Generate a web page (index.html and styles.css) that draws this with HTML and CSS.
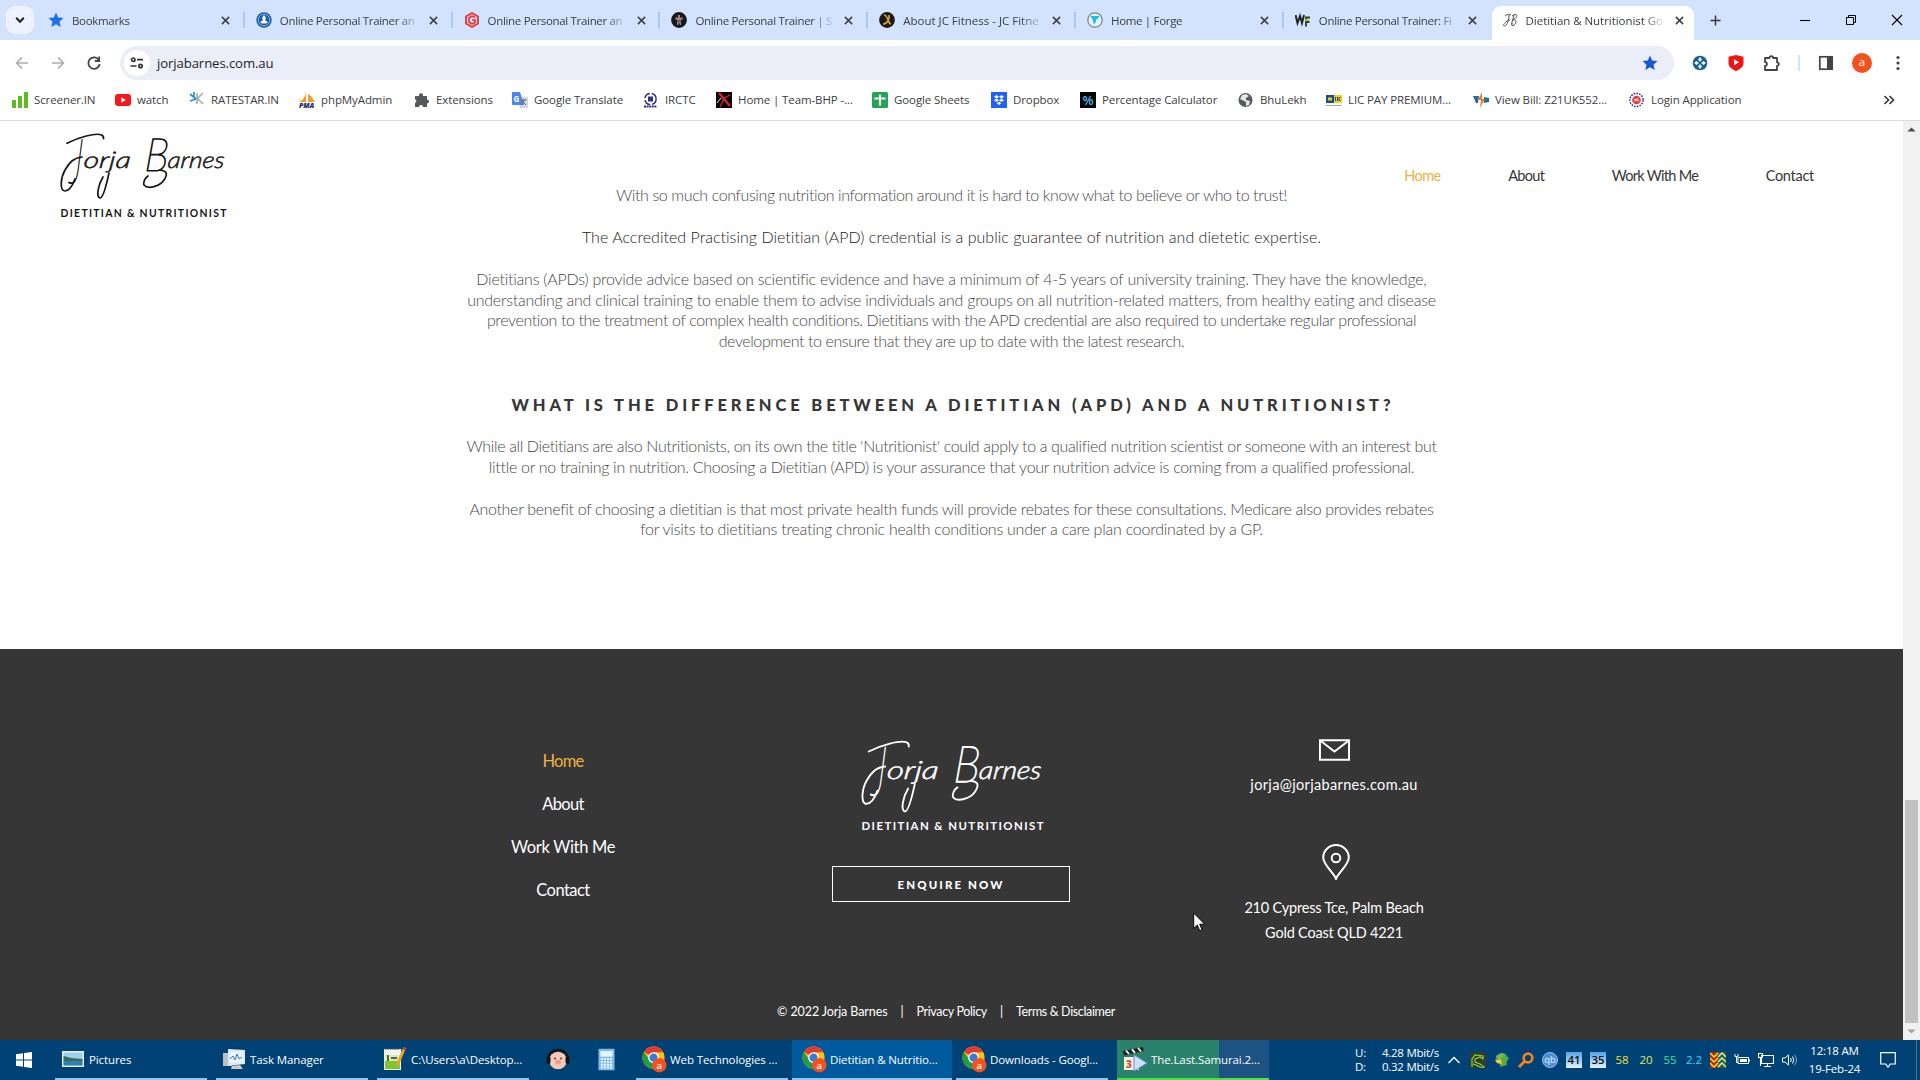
FILE: index.html
```html
<!DOCTYPE html>
<html lang="en">
<head>
<meta charset="utf-8">
<title>Dietitian &amp; Nutritionist Gold Coast</title>
<link rel="stylesheet" href="styles.css">
</head>
<body>
<svg class="defs" aria-hidden="true">
  <symbol id="close" viewBox="0 0 10 10"><path d="M1 1l8 8M9 1l-8 8" stroke="currentColor" stroke-width="1.7" fill="none"/></symbol>
  <symbol id="star" viewBox="0 0 16 16"><path d="M8 .6l2.200 5 5.300.5-4 3.600 1.200 5.400L8 12.300l-4.700 2.800 1.200-5.400-4-3.600 5.300-.5z" fill="currentColor"/></symbol>
  <symbol id="chrome" viewBox="0 0 26 28">
    <circle cx="12" cy="12" r="11.500" fill="#fbc116"/>
    <path d="M12 12L2 6.200A11.500 11.500 0 0 1 22 6.200V6.500H12z" fill="#e33b2e"/>
    <path d="M2 6.200A11.500 11.500 0 0 0 11.500 23.500L16 15 7.500 14z" fill="#229a49"/>
    <circle cx="12" cy="12" r="5.600" fill="#fff"/><circle cx="12" cy="12" r="4.300" fill="#2f7de1"/>
    <circle cx="18" cy="20" r="7.500" fill="#f4511e"/>
    <text x="18" y="23.500" font-family="Open Sans, sans-serif" font-size="10" font-weight="600" text-anchor="middle" fill="#fff">a</text>
  </symbol>
  <symbol id="signature" viewBox="0 0 168 72">
    <g fill="currentColor" font-family="Lato, sans-serif" font-style="italic" stroke="currentColor">
      <text font-weight="100" font-size="62" transform="translate(10 52) skewX(-4) scale(.5 1)" stroke-width="1.2">J</text>
      <text font-weight="300" font-size="23" transform="translate(24 37) skewX(-6)" textLength="47" lengthAdjust="spacingAndGlyphs" stroke-width=".5">orja</text>
      <text font-weight="100" font-size="46" transform="translate(85 40) skewX(-4) scale(.9 1)" stroke-width="1.2">B</text>
      <text font-weight="300" font-size="23" transform="translate(108 37) skewX(-6)" textLength="57" lengthAdjust="spacingAndGlyphs" stroke-width=".5">arnes</text>
    </g>
    <g fill="none" stroke="currentColor" stroke-width="1.700" stroke-linecap="round">
      <path d="M8 12.300C20 6 36 2 42 3.700q3 1 2.500 4"/>
      <path d="M16 48C13 56 10 60 6 60 0 60 2 46 6 39S14 27 23 26"/>
      <path d="M50 42C47 56 44 67 41 67c-4-1-2-13 3-21"/>
      <path d="M101 39c7 1 8 4 4 10S89 59 85 54c-1-3 1-7 4-9"/>
    </g>
  </symbol>
</svg>

<div class="tabstrip">
  <div class="tab-search"><svg width="10" height="8" viewBox="0 0 10 8"><path d="M1.200 1.800L5 5.800l3.800-4" fill="none" stroke="#222" stroke-width="2"/></svg></div>
  <div class="tab"><svg class="fav blue" viewBox="0 0 16 16"><use href="#star"/></svg><span class="title"><b>Bookmarks</b></span><svg class="x"><use href="#close"/></svg></div>
  <div class="tab"><svg class="fav" viewBox="0 0 16 16"><circle cx="8" cy="8" r="7.700" fill="#1d5fa8"/><circle cx="8" cy="8" r="5.800" fill="none" stroke="#9cc3ea" stroke-width=".8"/><path d="M8 3l2 3-1 2 3 2.500-2 1H6l-2-1L7 8 6 6z" fill="#fff"/></svg><span class="title"><b>Online Personal Trainer an</b></span><svg class="x"><use href="#close"/></svg></div>
  <div class="tab"><svg class="fav" viewBox="0 0 16 16"><path d="M8 1l6 3.500v7L8 15l-6-3.500v-7z" fill="none" stroke="#ee2f2f" stroke-width="1.800"/><path d="M11 5.500L8 4 5 6v4l3 2 3-1.500V8H8" fill="none" stroke="#ee2f2f" stroke-width="1.600"/></svg><span class="title"><b>Online Personal Trainer an</b></span><svg class="x"><use href="#close"/></svg></div>
  <div class="tab"><svg class="fav" viewBox="0 0 16 16"><circle cx="8" cy="8" r="7.900" fill="#17181c"/><path d="M7 3h2v3l2-1 1 2-2 1v5H9l-1-3-1 3H6V8L4 7l1-2 2 1z" fill="#b77f79"/><path d="M6 8h4v2H6z" fill="#3a6f9c"/></svg><span class="title"><b>Online Personal Trainer | S</b></span><svg class="x"><use href="#close"/></svg></div>
  <div class="tab"><svg class="fav" viewBox="0 0 16 16"><circle cx="8" cy="8" r="7.900" fill="#1b1a17"/><path d="M5 3c2 0 3 2 4 5s2 4 3 4M10 3c1 4-2 9-6 9" fill="none" stroke="#d3a22f" stroke-width="1.700"/></svg><span class="title wide"><b>About JC Fitness - JC Fitne</b></span><svg class="x"><use href="#close"/></svg></div>
  <div class="tab"><svg class="fav" viewBox="0 0 16 16"><circle cx="8" cy="8" r="7.200" fill="#e9f3fb" stroke="#74818c" stroke-width="1.200"/><path d="M3.500 4h9l-2 3H8.500l1 1.500L7 13 6 8.500z" fill="#12c3de"/></svg><span class="title"><b>Home | Forge</b></span><svg class="x"><use href="#close"/></svg></div>
  <div class="tab last"><svg class="fav" viewBox="0 0 16 16"><path d="M.5 3l2 8L5 4l2 7 2-8" fill="none" stroke="#222" stroke-width="2"/><path d="M15 5.500h-4v9M11 10h3.500" fill="none" stroke="#333" stroke-width="1.800"/><path d="M10 8.500l4-1.500" stroke="#8fd329" stroke-width="2"/></svg><span class="title"><b>Online Personal Trainer: Fi</b></span><svg class="x"><use href="#close"/></svg></div>
  <div class="tab active"><svg class="fav" viewBox="0 0 16 16"><path d="M2 4c2-2 5-2 6-1M6 3C6 8 4 14 1.500 14S2 9 7 8M9 4c4-3 6-1 4 1.500L10 8c4-1 4 4 0 5.500-2 .5-2-1 0-2M11 3L8.500 12" fill="none" stroke="#555" stroke-width="1"/></svg><span class="title"><b>Dietitian &amp; Nutritionist Go</b></span><svg class="x"><use href="#close"/></svg></div>
  <svg class="newtab" viewBox="0 0 12 12"><path d="M6 .5v11M.5 6h11" stroke="#333" stroke-width="1.600"/></svg>
  <div class="winbtns">
    <svg viewBox="0 0 12 12"><path d="M1 6.500h10" stroke="#000" stroke-width="1.100"/></svg>
    <svg viewBox="0 0 12 12"><path d="M1.500 3.500h7v7h-7zM3.500 3.500v-2h7v7h-2" fill="none" stroke="#000"/></svg>
    <svg viewBox="0 0 12 12"><path d="M1 1l10 10M11 1L1 11" stroke="#000" stroke-width="1.100"/></svg>
  </div>
</div>

<div class="toolbar">
  <svg class="nav dim" viewBox="0 0 16 16"><path d="M14 8H2.500M8 2.500L2.500 8 8 13.500" fill="none" stroke="currentColor" stroke-width="1.600"/></svg>
  <svg class="nav dim" viewBox="0 0 16 16"><path d="M2 8h11.500M8 2.500L13.500 8 8 13.500" fill="none" stroke="currentColor" stroke-width="1.600"/></svg>
  <svg class="nav" viewBox="0 0 16 16"><path d="M13 5.200A5.700 5.700 0 1 0 13.700 9" fill="none" stroke="currentColor" stroke-width="1.800"/><path d="M13.200 1.500V6H8.800" fill="none" stroke="currentColor" stroke-width="1.800"/></svg>
  <div class="omnibox">
    <div class="siteinfo"><svg width="14" height="12" viewBox="0 0 14 12"><g fill="none" stroke="#333" stroke-width="1.700"><circle cx="3.300" cy="2.700" r="1.700"/><path d="M7 2.700h6M.5 9h6"/><circle cx="10.500" cy="9" r="1.700"/></g></svg></div>
    <span class="url">jorjabarnes.com.au</span>
    <svg class="bookmarked" viewBox="0 0 16 16"><use href="#star"/></svg>
  </div>
  <div class="exts">
    <svg viewBox="0 0 16 16"><circle cx="8" cy="8" r="7.300" fill="#1f5f8c"/><path d="M8 2l2 2.500L8 7 6 4.500zM8 9l2 2.500L8 14l-2-2.500zM2 8l2.500-2L7 8l-2.500 2zM9 8l2.500-2L14 8l-2.500 2z" fill="#e5f3fb"/></svg>
    <svg viewBox="0 0 16 16"><path d="M8 0l7.500 1.800V8c0 4-4 6.500-7.500 8C4.500 14.500.5 12 .5 8V1.800z" fill="#f01414"/><path d="M6 4.300l5 3-5 3z" fill="#fff"/></svg>
    <svg viewBox="0 0 16 16"><path d="M1 3h4.500a1.800 1.800 0 0 1 3.600 0H13v4.300a1.800 1.800 0 0 1 0 3.600V15H1v-4a2 2 0 0 0 0-4z" fill="none" stroke="#444" stroke-width="1.800" stroke-linejoin="round"/></svg>
    <i></i>
    <svg viewBox="0 0 16 16"><rect x="1.800" y="1.800" width="12.400" height="12.400" fill="none" stroke="#444" stroke-width="1.700"/><path d="M9 2h5v12H9z" fill="#444"/></svg>
    <span class="avatar">a</span>
    <svg viewBox="0 0 16 16"><g fill="#444"><circle cx="8" cy="2.500" r="1.600"/><circle cx="8" cy="8" r="1.600"/><circle cx="8" cy="13.500" r="1.600"/></g></svg>
  </div>
</div>

<div class="bookmarks">
  <div class="bm"><svg viewBox="0 0 16 16"><path d="M0 8h4v8H0zM6 4h4v12H6zM12 0h4v16h-4z" fill="#5ebd22"/></svg><span>Screener.IN</span></div>
  <div class="bm"><svg viewBox="0 0 16 16"><rect y="2" width="16" height="12" rx="3" fill="#f8181b"/><path d="M6.300 5.200l4.500 2.800-4.500 2.800z" fill="#fff"/></svg><span>watch</span></div>
  <div class="bm"><svg viewBox="0 0 16 16"><path d="M1 2l6 5-6 2M5 0v6" fill="none" stroke="#2a8fcc" stroke-width="1.700"/><path d="M8 1v11M14 1L8.500 6.500 14 12" fill="none" stroke="#a8adb2" stroke-width="1.600"/></svg><span>RATESTAR.IN</span></div>
  <div class="bm"><svg viewBox="0 0 16 16"><path d="M7 0v10H0c4-2 6-5 7-10zM9 2c4 2 5 5 7 8H9z" fill="#f79a2b"/><text x="0" y="15.500" font-family="Open Sans, sans-serif" font-size="6" font-weight="800" font-style="italic" fill="#23285e" textLength="15" lengthAdjust="spacingAndGlyphs">PMA</text></svg><span>phpMyAdmin</span></div>
  <div class="bm"><svg viewBox="0 0 16 16"><path d="M1 4h4.200a2 2 0 1 1 3.600 0H13v3.500a2 2 0 1 1 0 4V15H9a2 2 0 0 0-4 0H1v-4a2 2 0 0 0 0-3.800z" fill="#55585c"/></svg><span>Extensions</span></div>
  <div class="bm"><svg viewBox="0 0 16 16"><path d="M6 5h10v11H8z" fill="#d5d8dc"/><path d="M0 1q0-1 1-1h7l4 13H1q-1 0-1-1z" fill="#4a86ef"/><text x="1.500" y="9.500" font-family="Open Sans, sans-serif" font-size="8" font-weight="700" fill="#fff">G</text><path d="M9.500 8h5M12 7v1c0 3-2 4-3 5M10 9l4 4" stroke="#667" fill="none"/></svg><span>Google Translate</span></div>
  <div class="bm"><svg viewBox="0 0 16 16"><circle cx="7.500" cy="7" r="5.600" fill="none" stroke="#2b2f87" stroke-width="1.500" stroke-dasharray="7 2"/><rect x="5" y="4.500" width="5" height="5" fill="#2b2f87"/><path d="M1 14.500h13" stroke="#2b2f87" stroke-width="2" stroke-dasharray="2 .6"/></svg><span>IRCTC</span></div>
  <div class="bm"><svg viewBox="0 0 16 16"><path d="M0 0h16v16H0z" fill="#050505"/><path d="M3 1l11 13" stroke="#e3222a" stroke-width="2.200"/><path d="M8 6l6-3M4 15l4-8" stroke="#e3222a" stroke-width="1.300"/><path d="M1 11l4-5" stroke="#ddd"/></svg><span>Home | Team-BHP -...</span></div>
  <div class="bm"><svg viewBox="0 0 16 16"><rect width="16" height="16" rx="1.500" fill="#23a455"/><path d="M8 2.500v11M2.500 6.500h11" stroke="#fff" stroke-width="2"/></svg><span>Google Sheets</span></div>
  <div class="bm"><svg viewBox="0 0 16 16"><path d="M0 0h16v16H0z" fill="#1f62fb"/><path d="M5.500 3L8 4.700 5.500 6.400 3 4.700zM10.500 3L13 4.700l-2.500 1.700L8 4.700zM5.500 6.600L8 8.300 5.500 10 3 8.300zM10.500 6.600L13 8.300 10.500 10 8 8.300zM8 9.700l2.300 1.600L8 13l-2.300-1.700z" fill="#fff"/></svg><span>Dropbox</span></div>
  <div class="bm"><svg viewBox="0 0 16 16"><path d="M0 0h16v16H0z" fill="#050505"/><text x="2.500" y="13" font-family="Open Sans, sans-serif" font-size="13" font-weight="600" fill="#4cb8ee" textLength="11" lengthAdjust="spacingAndGlyphs">%</text></svg><span>Percentage Calculator</span></div>
  <div class="bm"><svg viewBox="0 0 16 16"><circle cx="7.500" cy="8" r="7" fill="#55585c"/><path d="M4 3l4-1 3 2-3 2v2l4 1-1 4-3 1v-4L4 8 2 7z" fill="#fff" opacity=".85"/></svg><span>BhuLekh</span></div>
  <div class="bm"><svg viewBox="0 0 16 16"><path d="M0 3h8v8H0z" fill="#1b4b92"/><path d="M8 3h8v8H8z" fill="#f3cf1d"/><path d="M2 5.500h4v3H2z" fill="#f3cf1d"/><path d="M9.500 5v4M11.500 5v4M14.500 5.500h-1.500v3h1.500" stroke="#1b4b92" fill="none"/><path d="M0 13.500h16" stroke="#9aa9bf"/></svg><span>LIC PAY PREMIUM...</span></div>
  <div class="bm"><svg viewBox="0 0 16 16"><path d="M0 4h6l-1 7H3zM11 5l5 1v4l-5 1z" fill="#1f6f93"/><path d="M9 0L5 8h3l-1 8 5-9H9z" fill="#f07a2c"/></svg><span>View Bill: Z21UK552...</span></div>
  <div class="bm"><svg viewBox="0 0 16 16"><circle cx="7.500" cy="8" r="6.600" fill="none" stroke="#2b2f77" stroke-width="1.500" stroke-dasharray="1.600 1.200"/><circle cx="7.500" cy="8" r="4.300" fill="#e63a44"/><path d="M5 7l5 2M5.500 9.500L9.500 6" stroke="#fff"/></svg><span>Login Application</span></div>
  <svg class="more" viewBox="0 0 12 10"><path d="M1.500 1l4 4-4 4M6.500 1l4 4-4 4" fill="none" stroke="#333" stroke-width="1.600"/></svg>
</div>

<div class="viewport">
  <div class="page">
    <header class="site-header">
      <div class="logo"><svg class="sig" aria-label="Jorja Barnes"><use href="#signature"/></svg><span class="tag">DIETITIAN &amp; NUTRITIONIST</span></div>
      <nav class="site-nav"><a class="on">Home</a><a class="about">About</a><a class="work">Work With Me</a><a class="reach">Contact</a></nav>
    </header>
    <main class="copy">
      <p><span class="l1">With so much confusing nutrition information around it is hard to know what to believe or who to trust!</span></p>
      <p class="lead"><span>The Accredited Practising Dietitian (APD) credential is a public guarantee of nutrition and dietetic expertise.</span></p>
      <p><span class="l3">Dietitians (APDs) provide advice based on scientific evidence and have a minimum of 4-5 years of university training. They have the knowledge,</span>
      <span class="l4">understanding and clinical training to enable them to advise individuals and groups on all nutrition-related matters, from healthy eating and disease</span>
      <span class="l5">prevention to the treatment of complex health conditions. Dietitians with the APD credential are also required to undertake regular professional</span>
      <span class="l6">development to ensure that they are up to date with the latest research.</span></p>
      <h2><span>WHAT IS THE DIFFERENCE BETWEEN A DIETITIAN (APD) AND A NUTRITIONIST?</span></h2>
      <p><span class="l7">While all Dietitians are also Nutritionists, on its own the title 'Nutritionist' could apply to a qualified nutrition scientist or someone with an interest but</span>
      <span class="l8">little or no training in nutrition. Choosing a Dietitian (APD) is your assurance that your nutrition advice is coming from a qualified professional.</span></p>
      <p><span class="l9">Another benefit of choosing a dietitian is that most private health funds will provide rebates for these consultations. Medicare also provides rebates</span>
      <span class="l10">for visits to dietitians treating chronic health conditions under a care plan coordinated by a GP.</span></p>
    </main>
    <footer class="site-footer">
      <div class="cols">
        <nav class="foot-nav"><a class="on">Home</a><a class="about">About</a><a class="work">Work With Me</a><a class="reach">Contact</a></nav>
        <div class="brand">
          <div class="logo light"><svg class="sig" aria-label="Jorja Barnes"><use href="#signature"/></svg><span class="tag">DIETITIAN &amp; NUTRITIONIST</span></div>
          <a class="enquire"><span>ENQUIRE NOW</span></a>
        </div>
        <address class="contact">
          <svg class="mail" viewBox="0 0 32 22"><path d="M1 1h30v20H1zM1.500 1.500L16 12.500 30.500 1.500" fill="none" stroke="#fff" stroke-width="2"/></svg>
          <span class="email">jorja@jorjabarnes.com.au</span>
          <svg class="pin" viewBox="0 0 28 36"><path d="M14 34.800C12 29 1.200 21 1.200 13.500a12.800 12.500 0 0 1 25.600 0C26.800 21 16 29 14 34.800z" fill="none" stroke="#fff" stroke-width="2"/><circle cx="14" cy="14" r="4.300" fill="none" stroke="#fff" stroke-width="2"/></svg>
          <span class="street">210 Cypress Tce, Palm Beach</span>
          <span class="street">Gold Coast QLD 4221</span>
        </address>
      </div>
      <div class="legal"><span>© 2022 Jorja Barnes</span><i>|</i><span class="tight">Privacy Policy</span><i>|</i><span class="tight">Terms &amp; Disclaimer</span></div>
    </footer>
    <svg class="cursor" viewBox="0 0 13 20"><path d="M.7 1v15.500l3.600-3.400 2.400 5.600 2.400-1-2.400-5.500h5z" fill="#fff" stroke="#000"/></svg>
  </div>
  <div class="scrollbar">
    <svg viewBox="0 0 10 6"><path d="M0 5.500L5 .5l5 5z" fill="#505050"/></svg>
    <div class="thumb"></div>
    <svg viewBox="0 0 10 6"><path d="M0 .5l5 5 5-5z" fill="#a3a3a3"/></svg>
  </div>
</div>

<div class="taskbar">
  <div class="start"><svg width="16" height="16" viewBox="0 0 16 16"><path d="M0 2.200L7 1.200v6.300H0zM8 1.100L16 0v7.500H8zM0 8.500h7v6.300l-7-1zM8 8.500h8V16l-8-1.100z" fill="#fff"/></svg></div>
  <div class="task open"><svg class="ti" viewBox="0 0 24 24"><path d="M1 4h22v16H1z" fill="#e9eef2"/><path d="M2.500 5.500h19v13h-19z" fill="#9fd0ee"/><path d="M2.500 9l8 2 11 1v2h-19z" fill="#3e6b52"/><path d="M2.500 14h19v4.500h-19z" fill="#2c80b4"/></svg><span>Pictures</span></div>
  <div class="task open"><svg class="ti" viewBox="0 0 24 24"><path d="M1 6h9v13H1z" fill="#b9c1c6"/><path d="M6 2l17 1v14L6 19z" fill="#e4e8ea"/><path d="M8 5l13 .5v9L8 16z" fill="#eaf6ff"/><path d="M8 12l3-3 2 4 2-6 2 5 3-2" fill="none" stroke="#2a79c0"/><path d="M10 19l8-1 3 4H9z" fill="#c7cdd0"/></svg><span>Task Manager</span></div>
  <div class="task open"><svg class="ti" viewBox="0 0 24 24"><path d="M1 2h17v21H1z" fill="#f5f5f0"/><path d="M2 8h15v14H2z" fill="#7fc52d"/><path d="M2 8h15v6H2z" fill="#d8ecb8"/><path d="M2 2h15" stroke="#555" stroke-width="1.500" stroke-dasharray="1.500 1"/><path d="M5 8v6M8 11h6" stroke="#333" stroke-width="1.500"/><path d="M21 2L14 19" stroke="#e9a327" stroke-width="3"/><path d="M20 1l3 1.500" stroke="#c84030" stroke-width="3"/></svg><span>C:\Users\a\Desktop...</span></div>
  <div class="task pig"><svg viewBox="0 0 24 24"><path d="M2 13a10 10 0 0 1 20 0" fill="none" stroke="#151515" stroke-width="2.500"/><circle cx="12" cy="13.500" r="8.800" fill="#f6c9b4"/><rect x=".5" y="9" width="4" height="8" rx="2" fill="#151515"/><rect x="19.500" y="9" width="4" height="8" rx="2" fill="#151515"/><ellipse cx="12" cy="15" rx="3" ry="2.200" fill="#f09b92"/><circle cx="9" cy="11.500" r=".9" fill="#333"/><circle cx="15" cy="11.500" r=".9" fill="#333"/></svg></div>
  <div class="task calc"><svg viewBox="0 0 18 24"><rect x=".5" y=".5" width="17" height="23" rx="1" fill="#7fbde8"/><path d="M2.500 3h13v6h-13z" fill="#e6f3fc"/><path d="M3 11.500h12M3 14.500h12M3 17.500h12M3 20.500h12" stroke="#eef7fd" stroke-width="2" stroke-dasharray="2.200 1"/></svg></div>
  <div class="task open"><svg class="ci"><use href="#chrome"/></svg><span>Web Technologies ...</span></div>
  <div class="task open current"><svg class="ci"><use href="#chrome"/></svg><span>Dietitian &amp; Nutritio...</span></div>
  <div class="task open"><svg class="ci"><use href="#chrome"/></svg><span>Downloads - Googl...</span></div>
  <div class="task open media"><svg class="ti" viewBox="0 0 24 24"><path d="M1 10h15v13H1z" fill="#f2efe8"/><path d="M0 4l20-4 .7 4L1 8.500z" fill="#222"/><path d="M3 3.500l3 3.500M9 2.300l3 3.500M15 1l3 3.500" stroke="#fff" stroke-width="1.800"/><text x="3" y="21" font-family="Open Sans, sans-serif" font-size="10" font-weight="800" fill="#d4552b">3</text><path d="M11 8l13 8-13 8z" fill="#cfe0fa" stroke="#6b8fd0"/></svg><span>The.Last.Samurai.2...</span></div>
  <div class="net"><span>U:<br>D:</span><span>4.28 Mbit/s<br>0.32 Mbit/s</span></div>
  <div class="tray">
    <svg viewBox="0 0 16 16"><path d="M2.500 11L8 5.500l5.500 5.500" fill="none" stroke="#fff" stroke-width="1.300"/></svg>
    <svg viewBox="0 0 16 16"><path d="M0 0h16v16H0z" fill="#333a34"/><path d="M2 15V7l3-4 8 1v3l-3-2-5 2v3l5 2 4 3-2 1-6-3-3-1" fill="none" stroke="#85d829" stroke-width="1.200"/></svg>
    <svg viewBox="0 0 16 16"><circle cx="8" cy="7" r="6.500" fill="#2e66a8"/><path d="M2 4l6-3 4 2-5 4H3z" fill="#79bb3c"/><path d="M9 3l6 3-3 3 1 4-7 2 1-5z" fill="#58b03a"/><path d="M1 8l6-1 1 5-5-1z" fill="#f3d12b"/></svg>
    <svg viewBox="0 0 16 16"><circle cx="10" cy="6" r="4.400" fill="none" stroke="#f58220" stroke-width="2.600"/><path d="M6.500 9.500L1 15" stroke="#f58220" stroke-width="3"/></svg>
    <svg viewBox="0 0 16 16"><circle cx="8" cy="8" r="7.600" fill="#4d8fdb" stroke="#a9c9ef" stroke-width=".8"/><text x="8" y="11.300" font-family="Open Sans, sans-serif" font-size="9.500" text-anchor="middle" fill="#e6f1fd">qb</text></svg>
    <span class="chip">41</span><span class="chip">35</span>
    <span class="y">58</span><span class="y2">20</span><span class="g">55</span><span class="c">2.2</span>
    <svg viewBox="0 0 16 16"><path d="M0 0h8v16H0z" fill="#a82a1b"/><path d="M8 0h8v16H8z" fill="#1f6b2a"/><path d="M0 1l4 4 4-4M0 6l4 4 4-4M0 11l4 4 4-4" fill="none" stroke="#f3e22b" stroke-width="1.500"/><path d="M8 5l4-4 4 4M8 10l4-4 4 4M8 15l4-4 4 4" fill="none" stroke="#e9e0c0" stroke-width="1.500"/></svg>
    <svg viewBox="0 0 16 16"><path d="M4 5.500h10.500v6H4z" fill="none" stroke="#fff"/><path d="M6 7h7v3H6z" fill="#fff"/><path d="M15.500 7.500v2M1 2v2.500h3V2M2.500 5v5.500H4" stroke="#fff" fill="none"/></svg>
    <svg viewBox="0 0 16 16"><path d="M3.500 3.500h12v8h-12zM9.500 12v2M6 14.500h7M.5 1.500h4v4h-4zM2.500 6v8" fill="none" stroke="#fff" stroke-width="1.100"/></svg>
    <svg viewBox="0 0 16 16"><path d="M.5 6h2.500l3.500-3v10L3 10H.5z" fill="none" stroke="#fff"/><path d="M8.500 6q1.500 2 0 4M10.500 4.500q2.500 3.500 0 7" fill="none" stroke="#fff"/><path d="M12.500 3q4 5 0 10" fill="none" stroke="#8aa7c0"/></svg>
  </div>
  <div class="clock"><span>12:18 AM</span><span>19-Feb-24</span></div>
  <svg class="notif" viewBox="0 0 16 16"><path d="M.7.7h14.600v11.300h-5L8 15.200 5.700 12h-5z" fill="none" stroke="#fff" stroke-width="1.200"/></svg>
  <i class="peek"></i>
</div>
</body>
</html>
```
FILE: styles.css
```css
* { box-sizing: border-box; }
body { margin: 0; width: 1920px; height: 1080px; overflow: hidden; display: flex; flex-direction: column; background: #fff; font-family: "Open Sans", "Noto Sans", sans-serif; font-size: 11.5px; letter-spacing: -.1px; color: #3c4043; }
svg { display: block; flex: none; }
.defs { display: none; }
b { font-weight: 400; }
i { font-style: normal; }

/* Tab strip */
.tabstrip { height: 40px; flex: none; background: #d3e2fd; display: flex; align-items: center; padding-left: 6px; }
.tab-search { width: 28px; height: 28px; margin-right: 3px; border-radius: 9px; background: #ecf2fe; display: grid; place-items: center; }
.tab { width: 207.8px; flex: none; display: flex; align-items: center; padding: 0 14px 0 11px; border-right: 2px solid #a8c7fa; height: 16px; }
.tab.last { border-right-color: transparent; }
.fav { width: 16px; height: 16px; margin-right: 8px; }
.blue { color: #1a73e8; }
.title { width: 142px; flex: none; white-space: pre; line-height: 18px; padding-top: 1px; letter-spacing: -.32px; -webkit-mask-image: linear-gradient(90deg, #000 118px, transparent 140px); mask-image: linear-gradient(90deg, #000 118px, transparent 140px); }
.title.wide { letter-spacing: 0; }
.x { width: 9px; height: 9px; margin-left: 7px; color: #3c4043; }
.tab.active { width: 202px; height: 34px; margin-top: 6px; padding: 0 12px 6px 11px; border: 0; border-radius: 9px 9px 0 0; background: #fff; }
.tab.active .fav { margin-right: 7px; }
.tab.active .title { letter-spacing: -.05px; }
.newtab { width: 11px; height: 11px; margin-left: 16px; }
.winbtns { margin-left: auto; display: flex; gap: 34px; padding-right: 17px; }
.winbtns svg { width: 12px; height: 12px; }

/* Toolbar */
.toolbar { height: 46px; flex: none; display: flex; align-items: center; padding-left: 14px; }
.nav { width: 16px; height: 16px; margin-right: 20px; color: #444; }
.nav.dim { color: #a9abae; }
.omnibox { width: 1554px; height: 34px; margin-left: -2px; flex: none; border-radius: 17px; background: #ebeef8; display: flex; align-items: center; padding: 0 16px 0 4px; }
.siteinfo { width: 26px; height: 26px; border-radius: 50%; background: #fff; display: grid; place-items: center; }
.url { margin-left: 7px; font-size: 13.2px; letter-spacing: -.12px; color: #1f1f1f; }
.bookmarked { width: 16px; height: 16px; margin-left: auto; color: #1558d6; }
.exts { display: flex; align-items: center; padding-left: 18px; }
.exts svg { width: 16px; height: 16px; margin-right: 20px; }
.exts i { width: 2px; height: 16px; background: #d3e2fd; margin: 0 18px 0 -2px; }
.avatar { width: 20px; height: 20px; border-radius: 50%; background: #f4511e; color: #fff; text-align: center; line-height: 18px; margin: 0 18px 0 -2px; }

/* Bookmarks bar */
.bookmarks { height: 35px; flex: none; border-bottom: 1px solid #dadce0; display: flex; align-items: center; padding: 0 25px 7px 12px; white-space: nowrap; }
.bm { display: flex; align-items: center; gap: 6px; flex: none; }
.bm svg { width: 16px; height: 16px; }
.bm:nth-child(1) { width: 103px; }
.bm:nth-child(2) { width: 74px; }
.bm:nth-child(3) { width: 110px; }
.bm:nth-child(4) { width: 115px; }
.bm:nth-child(5) { width: 98px; }
.bm:nth-child(6) { width: 131px; }
.bm:nth-child(7) { width: 73px; }
.bm:nth-child(8) { width: 156px; }
.bm:nth-child(9) { width: 119px; }
.bm:nth-child(10) { width: 89px; }
.bm:nth-child(11) { width: 158px; }
.bm:nth-child(12) { width: 88px; }
.bm:nth-child(13) { width: 147px; }
.bm:nth-child(14) { width: 156px; }
.more { width: 12px; height: 10px; margin-left: auto; }

/* Web page */
.viewport { height: 919px; flex: none; display: flex; }
.page { width: 1903px; position: relative; display: flex; flex-direction: column; font-family: Lato, sans-serif; letter-spacing: 0; color: #363636; }
.site-header { position: absolute; left: 0; top: 0; width: 100%; display: flex; justify-content: space-between; padding: 10px 89px 0 59px; }
.logo { display: flex; flex-direction: column; align-items: flex-start; width: 168px; color: #161616; }
.sig { width: 168px; height: 72px; }
.tag { font-size: 10.4px; line-height: 14px; font-weight: 700; letter-spacing: 1.31px; white-space: nowrap; margin: 3px 0 0 1.5px; }
.site-nav { display: flex; gap: 67.5px; padding-top: 35px; font-size: 14.5px; letter-spacing: -.55px; line-height: 20px; white-space: nowrap; }
.site-nav .about, .site-nav .work { letter-spacing: -.7px; }
.site-nav .reach { letter-spacing: -.28px; }
.on { color: #edb240; }
.copy { height: 528px; padding-top: 64px; text-align: center; font-size: 16px; line-height: 20.9px; font-weight: 300; color: #484848; }
.copy p { margin: 0 0 20.9px; display: flex; flex-direction: column; align-items: center; white-space: nowrap; }
.copy .lead { color: #222; letter-spacing: .028px; }
.copy h2 { margin: 42.8px 0 19.9px; font-size: 16.5px; line-height: 20.9px; font-weight: 900; letter-spacing: 3.88px; color: #363636; display: flex; justify-content: center; white-space: nowrap; }
.copy h2 span { margin-right: -3px; }
.l1 { letter-spacing: -.399px; }
.l3 { letter-spacing: -.239px; }
.l4 { letter-spacing: -.253px; }
.l5 { letter-spacing: -.384px; }
.l6 { letter-spacing: -.41px; }
.l7 { letter-spacing: -.357px; }
.l8 { letter-spacing: -.3px; }
.l9 { letter-spacing: -.314px; }
.l10 { letter-spacing: -.24px; }

.site-footer { flex: 1; background: #363636; color: #fff; display: flex; flex-direction: column; }
.cols { display: grid; grid-template-columns: 210px 238px 200px; gap: 164px; justify-content: center; height: 353px; padding: 89px 11px 0 0; }
.foot-nav { display: flex; flex-direction: column; align-items: center; gap: 23px; padding-top: 12.5px; font-size: 16.5px; letter-spacing: -.7px; line-height: 20px; }
.foot-nav .work { letter-spacing: -.32px; }
.foot-nav .reach { letter-spacing: -.54px; }
.brand { display: flex; flex-direction: column; align-items: center; }
.light { color: #fff; width: 184px; margin-left: 2px; }
.light .sig { width: 184px; height: 79px; }
.light .tag { font-size: 11.4px; letter-spacing: 1.44px; margin-top: 2px; }
.enquire { width: 238px; height: 36px; margin-top: 33px; border: 1px solid #fff; display: grid; place-items: center; font-size: 11.5px; font-weight: 900; letter-spacing: 2.1px; }
.contact { font-style: normal; display: flex; flex-direction: column; align-items: center; font-size: 14.5px; line-height: 25px; white-space: nowrap; }
.mail { width: 31px; height: 22px; margin-top: 1px; }
.email { margin-top: 11px; letter-spacing: .34px; }
.street { letter-spacing: -.198px; }
.pin { width: 28px; height: 36px; margin: 47px 0 15px 3px; }
.legal { display: flex; justify-content: center; gap: 13px; padding-right: 11px; font-size: 12.5px; letter-spacing: -.1px; line-height: 20px; white-space: nowrap; }
.tight { letter-spacing: -.355px; }
.cursor { position: absolute; left: 1193px; top: 791px; width: 13px; height: 20px; }
.scrollbar { width: 17px; background: #f1f1f1; display: flex; flex-direction: column; align-items: center; padding: 6px 0; }
.scrollbar svg { width: 9px; height: 5px; }
.thumb { width: 13px; height: 223px; margin: auto 0 6px; background: #c1c1c1; }

/* Taskbar */
.taskbar { height: 40px; flex: none; background: #004275; color: #fff; display: flex; align-items: center; white-space: nowrap; }
.start { width: 55px; padding-left: 16px; }
.task { width: 152px; height: 40px; flex: none; margin-right: 9px; display: flex; align-items: center; gap: 4px; padding: 0 0 0 6px; border-bottom: 2px solid transparent; }
.open { border-bottom-color: #93c6ef; }
.ti { width: 24px; height: 24px; }
.ci { width: 25px; height: 27px; margin-right: -1px; }
.pig { width: 40px; padding-left: 8px; }
.pig svg { width: 24px; height: 24px; }
.calc { width: 40px; margin-right: 9px; padding-left: 11px; }
.calc svg { width: 17px; height: 23px; }
.current { width: 160px; margin: 0 4px 0 -5px; padding-left: 10px; background: #005a9e; }
.media { background: linear-gradient(90deg, #2a826c 102px, #1d5383 102px); border-bottom-color: #4be33c; }
.net { margin: 0 7px 0 auto; display: flex; gap: 16px; line-height: 14px; letter-spacing: -.25px; }
.tray { display: flex; align-items: center; gap: 8px; }
.tray svg, .tray span { width: 16px; height: 16px; }
.tray span { text-align: center; line-height: 16px; }
.chip { background: linear-gradient(#4fa3ea, #e6f3fd); color: #111; font-weight: 600; }
.y { color: #f5e13a; }
.y2 { color: #e2ea58; }
.g { color: #35e39b; }
.c { color: #2fdcf0; }
.clock { width: 73px; display: flex; flex-direction: column; align-items: center; line-height: 18px; letter-spacing: -.2px; }
.notif { width: 16px; height: 16px; margin: 0 20px 0 9px; }
.peek { width: 1px; height: 40px; background: #4b7698; margin-right: 3px; }
```
